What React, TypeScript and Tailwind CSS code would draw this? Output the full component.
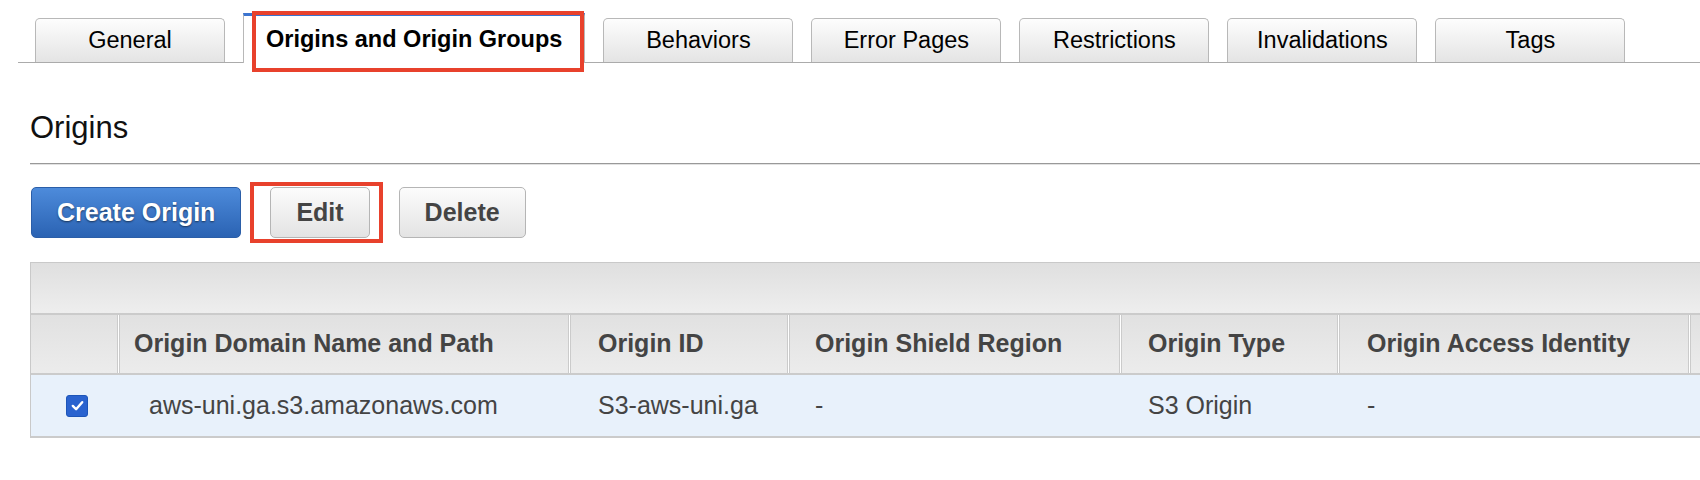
import React from "react";

const font = "font-['Liberation_Sans','Helvetica_Neue',Arial,sans-serif]";

const tabs = [
  "General",
  "Origins and Origin Groups",
  "Behaviors",
  "Error Pages",
  "Restrictions",
  "Invalidations",
  "Tags",
];

const columns = [
  { label: "", width: "w-[87px]", pad: "" },
  { label: "Origin Domain Name and Path", width: "w-[450px]", pad: "pl-[14px]" },
  { label: "Origin ID", width: "w-[218px]", pad: "pl-[27px]" },
  { label: "Origin Shield Region", width: "w-[331px]", pad: "pl-[25px]" },
  { label: "Origin Type", width: "w-[217px]", pad: "pl-[26px]" },
  { label: "Origin Access Identity", width: "w-[350px]", pad: "pl-[27px]" },
  { label: "", width: "w-[200px]", pad: "" },
];

const row = ["", "aws-uni.ga.s3.amazonaws.com", "S3-aws-uni.ga", "-", "S3 Origin", "-", ""];
const rowPad = ["", "pl-[29px]", "pl-[27px]", "pl-[25px]", "pl-[26px]", "pl-[27px]", ""];

function Tab({ label, active }: { label: string; active: boolean }) {
  if (active) {
    return (
      <div className="relative -mb-px flex h-[50px] shrink-0 items-center border-x border-t-[3px] border-x-[#b8b8b8] border-t-[#3b74d0] bg-white px-[22px] text-[23.5px] font-bold text-black">
        {label}
        <div className="absolute -top-[5px] left-[8px] right-0 h-[61px] border-4 border-[#e8412c]" />
      </div>
    );
  }
  return (
    <div className="flex h-[44px] w-[190px] shrink-0 items-center justify-center rounded-t-[5px] border-x border-t border-[#b8b8b8] bg-gradient-to-b from-[#fdfdfd] to-[#e4e4e4] text-[23.5px] text-black">
      {label}
    </div>
  );
}

function GrayButton({ children }: { children: React.ReactNode }) {
  return (
    <button className="h-[51px] rounded-[5px] border border-[#b5b5b5] bg-gradient-to-b from-[#fcfcfc] to-[#e3e3e3] px-[25px] text-[25px] font-bold text-[#444]">
      {children}
    </button>
  );
}

export default function App() {
  return (
    <div className={`h-[480px] w-[1700px] overflow-hidden bg-white ${font}`}>
      {/* tabs */}
      <div className="ml-[18px] flex items-end gap-[18px] border-b border-[#ababab] pl-[17px] pt-[13px]">
        {tabs.map((t, i) => (
          <Tab key={t} label={t} active={i === 1} />
        ))}
      </div>

      <h2 className="ml-[30px] mt-[47px] text-[31px] leading-[36px] text-[#111]">Origins</h2>
      <div className="ml-[30px] mt-[17px] h-[2px] border-t border-[#999] bg-[#e2e2e2]" />

      {/* actions */}
      <div className="ml-[31px] mt-[22px] flex items-center gap-[29px]">
        <button className="h-[51px] rounded-[5px] border border-[#2b5ea8] bg-gradient-to-b from-[#4d8bdb] to-[#2b63b3] px-[25px] text-[25px] font-bold text-white [text-shadow:0_1px_2px_rgba(0,0,0,0.55)]">
          Create Origin
        </button>
        <div className="relative">
          <GrayButton>Edit</GrayButton>
          <div className="absolute -left-[20px] -top-[5px] h-[61px] w-[133px] border-4 border-[#e8412c]" />
        </div>
        <GrayButton>Delete</GrayButton>
      </div>

      {/* table */}
      <div className="ml-[30px] mt-[24px] w-[1900px] border-l border-t border-[#c9c9c9]">
        <div className="h-[52px] border-b-2 border-[#cbcbcb] bg-gradient-to-b from-[#dfdfdf] to-[#eeeeee]" />
        <div className="flex gap-px bg-white">
          {columns.map((c, i) => (
            <div
              key={i}
              className={`flex h-[58px] shrink-0 items-center border-r border-[#cbcbcb] bg-gradient-to-b from-[#e1e1e1] to-[#ececec] text-[25px] font-bold text-[#444] ${c.width} ${c.pad} ${i === 0 ? "" : "border-l"}`}
            >
              {c.label}
            </div>
          ))}
        </div>
        <div className="flex gap-px border-y-2 border-[#cbcbcb] bg-[#e8f1fb]">
          {columns.map((c, i) => (
            <div
              key={i}
              className={`flex h-[61px] shrink-0 items-center border-x border-transparent text-[25px] text-[#444] ${c.width} ${rowPad[i]}`}
            >
              {i === 0 ? (
                <span className="ml-[34px] flex h-[22px] w-[22px] items-center justify-center rounded-[3px] border border-[#1d55b8] bg-[#2a63cf]">
                  <svg viewBox="0 0 16 16" className="h-[15px] w-[15px]">
                    <path d="M3 8.5 L6.5 12 L13 4.5" fill="none" stroke="white" strokeWidth="2.6" strokeLinecap="round" strokeLinejoin="round" />
                  </svg>
                </span>
              ) : (
                row[i]
              )}
            </div>
          ))}
        </div>
      </div>
    </div>
  );
}
